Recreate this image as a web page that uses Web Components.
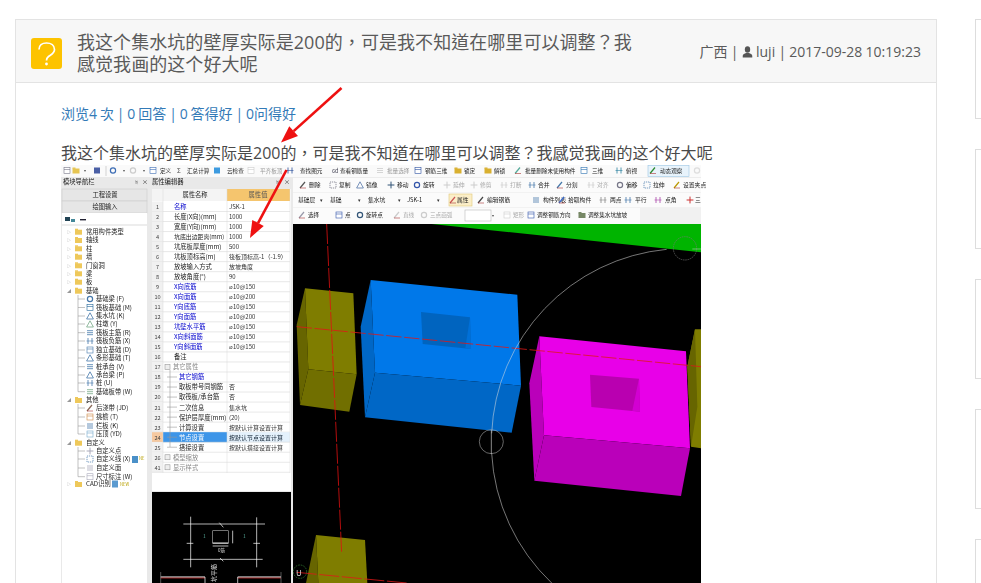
<!DOCTYPE html>
<meta charset="utf-8">
<title>问题详情</title>
<style>
    html, body { margin: 0; background: #fff; }
    body { font-family: "Open Sans", "Noto Sans CJK TC", sans-serif; color: #555; }
</style>

<template id="question-page-template">
    <style>
        :host { display: flex; gap: 38px; padding: 19px 0 0 15px; width: 981px; height: 583px; box-sizing: border-box; overflow: hidden; }
        .main { flex: none; width: 922px; }
        .side { flex: none; width: 250px; display: flex; flex-direction: column; gap: 30px; }
    </style>
    <div class="main"><slot></slot></div>
    <div class="side"><slot name="side"></slot></div>
</template>

<template id="question-panel-template">
    <style>
        :host { display: block; border: 1px solid #e3e3e3; border-bottom: 0; box-sizing: border-box; height: 564px; }
        header { display: flex; align-items: flex-start; height: 62px; background: #f7f7f7; border-bottom: 1px solid #e3e3e3; padding: 0 15px; }
        .icon { flex: none; width: 31px; height: 31px; margin: 18px 15px 0 0; }
        .title { flex: none; width: 564px; margin-top: 11px; font-size: 18px; line-height: 22px; letter-spacing: .06px; color: #5a5a5a; }
        .meta { flex: 1; margin-top: 21px; text-align: right; font-size: 14px; line-height: 22px; word-spacing: -.4px; color: #5a5a5a; }
        .body { padding: 20px 0 0 45px; }
    </style>
    <header>
        <svg class="icon" viewBox="0 0 31 31">
            <rect width="31" height="31" rx="3" fill="#fdc300"/>
            <path d="M8 11.5C8 7.5 11 5 15.5 5S23.5 7.5 23.5 11.5C23.5 15.5 20 16.5 17.5 18.5C16 19.7 15.5 20.5 15.5 22.5" fill="none" stroke="#fff" stroke-width="1.7"/>
            <circle cx="15.5" cy="26" r="1.4" fill="#fff"/>
        </svg>
        <div class="title"><slot name="title"></slot></div>
        <div class="meta"><slot name="meta"></slot></div>
    </header>
    <div class="body"><slot></slot></div>
</template>

<template id="question-stats-template">
    <style>
        :host { display: block; font-size: 14px; line-height: 22px; word-spacing: -.75px; color: #337ab7; margin-bottom: 17px; }
    </style>
    <slot></slot>
</template>

<template id="question-text-template">
    <style>
        :host { display: block; font-size: 16px; line-height: 22px; color: #4a4a4a; height: 23px; }
    </style>
    <slot></slot>
</template>

<template id="user-icon-template">
    <style>
        :host { display: inline-block; width: 11px; height: 12px; vertical-align: -1px; }
        svg { display: block; }
    </style>
    <svg width="11" height="12" viewBox="0 0 12 13">
        <ellipse cx="6" cy="3.7" rx="2.9" ry="3.5" fill="#555"/>
        <path d="M.8 12.5V10.6C.8 9 3 8.3 4.4 7.7H7.6C9 8.3 11.2 9 11.2 10.6V12.5Z" fill="#555"/>
    </svg>
</template>

<template id="side-box-template">
    <style>
        :host { display: block; flex: none; height: 100px; border: 1px solid #ddd; box-sizing: border-box; }
    </style>
    <slot></slot>
</template>

<question-page>
    <question-panel>
        <span slot="title">我这个集水坑的壁厚实际是200的，可是我不知道在哪里可以调整？我感觉我画的这个好大呢</span>
        <span slot="meta">广西 | <user-icon></user-icon> luji | 2017-09-28 10:19:23</span>
        <question-stats>浏览4 次 | 0 回答 | 0 答得好 | 0问得好</question-stats>
        <question-text>我这个集水坑的壁厚实际是200的，可是我不知道在哪里可以调整？我感觉我画的这个好大呢</question-text>
        <cad-shot></cad-shot>
    </question-panel>
    <side-box slot="side"></side-box>
    <side-box slot="side"></side-box>
    <side-box slot="side"></side-box>
    <side-box slot="side"></side-box>
    <side-box slot="side"></side-box>
</question-page>

<script>
    function simple(name, id) {
        customElements.define(name, class extends HTMLElement {
            constructor() {
                super();
                this.attachShadow({ mode: "open" }).appendChild(document.getElementById(id).content.cloneNode(true));
            }
        });
    }
    simple("question-page", "question-page-template");
    simple("question-panel", "question-panel-template");
    simple("question-stats", "question-stats-template");
    simple("question-text", "question-text-template");
    simple("user-icon", "user-icon-template");
    simple("side-box", "side-box-template");

    // small text in page coordinates, y is the middle of the line
    function t(x, y, s, fill = "#222", anchor = "start", size = 6.3) {
        return `<text x="${x}" y="${y + 2.4}" fill="${fill}" font-size="${size}" text-anchor="${anchor}">${s}</text>`;
    }
    function r(x, y, w, h, fill, stroke) {
        return `<rect x="${x}" y="${y}" width="${w}" height="${h}" fill="${fill}"${stroke ? ` stroke="${stroke}" stroke-width=".6"` : ""}/>`;
    }
    function l(x1, y1, x2, y2, stroke = "#ccc", w = 0.7) {
        return `<line x1="${x1}" y1="${y1}" x2="${x2}" y2="${y2}" stroke="${stroke}" stroke-width="${w}"/>`;
    }
    function p(points, fill) {
        return `<polygon points="${points}" fill="${fill}"/>`;
    }
    // tiny toolbar glyphs, x,y is the icon's centre
    function g(x, y, kind, c = "#47a") {
        switch (kind) {
            case "pen": return l(x - 3, y + 3, x + 2, y - 3, c, 1.2) + l(x - 3, y + 3, x + 3, y + 3, "#a33", 0.6);
            case "dash": return `<rect x="${x - 3}" y="${y - 3}" width="6" height="6" fill="none" stroke="${c}" stroke-width=".7" stroke-dasharray="1.2 .8"/>`;
            case "tri": return `<path d="M${x} ${y - 3.2}L${x + 3.4} ${y + 3}H${x - 3.4}Z" fill="none" stroke="${c}" stroke-width=".8"/>`;
            case "cross": return l(x - 3.4, y, x + 3.4, y, c, 1) + l(x, y - 3.4, x, y + 3.4, c, 1);
            case "ring": return `<circle cx="${x}" cy="${y}" r="2.6" fill="none" stroke="${c}" stroke-width="1.2"/>`;
            case "bars": return l(x - 2, y - 3, x - 2, y + 3, c, 0.8) + l(x + 2, y - 3, x + 2, y + 3, c, 0.8) + l(x - 3.5, y, x + 3.5, y, c, 0.6);
            case "lines": return l(x - 3, y - 2, x + 3, y - 2, c, 0.8) + l(x - 3, y, x + 3, y, c, 0.8) + l(x - 3, y + 2, x + 3, y + 2, c, 0.8);
            case "frame": return r(x - 3, y - 3, 6, 6, "#fff", c) + l(x - 3, y - 1, x + 3, y - 1, c, 0.6);
            case "folder": return r(x - 3.5, y - 2, 7, 5, c) + r(x - 3.5, y - 3, 3, 1.4, c);
            default: return r(x - 3, y - 3, 6, 6, c);
        }
    }

    function toolbar() {
        let s = r(61, 165, 640, 12, "#fafafa") + r(293, 177, 408, 47, "#fbfbfb");
        s += r(293, 177, 408, 1, "#ececec") + r(293, 192, 408, 1, "#f2f2f2") + r(293, 207, 408, 1, "#f2f2f2");
        s += r(640, 208, 61, 16, "#f1f1f1");
        s += r(648, 165.5, 41, 11, "#e8f3fb", "#9cc5e5");
        [[67, "frame", "#778"], [76, "folder", "#e6c552"], [97, "box", "#4a5fa5"], [113, "ring", "#3d6db5"], [133, "ring", "#ccc"], [153, "frame", "#3d6db5"], [217, "box", "#3d9be0"], [251, "frame", "#ccc"], [290, "bars", "#2a4f9a"], [380, "lines", "#ccc"], [418, "frame", "#2a4fa0"], [458, "folder", "#d9b030"], [488, "folder", "#d9b030"], [518, "pen", "#5a9"], [584, "frame", "#2a70b0"], [619, "bars", "#2a80a0"], [653, "pen", "#2a8a30"], [697, "ring", "#ddd"]].forEach(([x, k, c]) => s += g(x, 170.5, k, c));
        [84, 123, 143].forEach(x => s += t(x, 170, "▾", "#555", "start", 4));
        s += l(106, 166, 106, 176, "#bbb", 0.6);
        s += t(177, 170.5, "Σ", "#444");
        [[160, "定义"], [187, "汇总计算"], [227, "云检查"], [300, "查找图元"], [340, "查看钢筋量"], [425, "钢筋三维"], [464, "锁定"], [494, "解锁"], [525, "批量删除未使用构件"], [592, "三维"], [626, "俯视"], [660, "动态观察"]].forEach(([x, v]) => s += t(x, 170.5, v, "#222", "start", 5.6));
        [[260, "平齐板顶"], [387, "批量选择"]].forEach(([x, v]) => s += t(x, 170.5, v, "#999", "start", 5.6));
        s += t(332, 170.5, "6d", "#445", "start", 5.6);

        [[309, "删除", "pen", "#555"], [339, "复制", "dash", "#667"], [366, "镜像", "tri", "#57a"], [397, "移动", "cross", "#357"], [423, "旋转", "ring", "#35a"], [453, "延伸", "cross", "#ccc"], [480, "修剪", "cross", "#ccc"], [510, "打断", "bars", "#ccc"], [538, "合并", "bars", "#47a"], [566, "分割", "pen", "#47a"], [597, "对齐", "bars", "#ccc"], [626, "偏移", "ring", "#778"], [653, "拉伸", "dash", "#47a"], [683, "设置夹点", "pen", "#b90"]].forEach(([x, v, k, c]) => {
            s += g(x - 6, 185, k, c);
            s += t(x, 185, v, c === "#ccc" ? "#aaa" : "#222", "start", 5.8);
        });

        [[298, "基础层"], [330, "基础"], [368, "集水坑"], [407, "JSK-1"], [487, "编辑钢筋"], [543, "构件列表"], [568, "拾取构件"], [610, "两点"], [635, "平行"], [665, "点角"], [695, "三"]].forEach(([x, v]) => s += t(x, 200, v, "#222", "start", 5.8));
        [320, 358, 398, 437].forEach(x => s += t(x, 200, "▾", "#333", "start", 4.5));
        s += r(449, 194, 23, 12, "#fbeec8", "#e2c878") + g(453, 200, "pen", "#c55") + t(457, 200, "属性", "#222", "start", 5.8);
        [[481, "pen", "#444"], [536, "lines", "#47a"], [562, "pen", "#36c"], [603, "bars", "#888"], [628, "bars", "#47a"], [658, "bars", "#a4a"], [690, "cross", "#c33"]].forEach(([x, k, c]) => s += g(x, 200, k, c));

        [[308, "选择", "pen", "#99a"], [345, "点", "frame", "#35a"], [366, "旋转点", "ring", "#357"], [403, "直线", "pen", "#ccc"], [430, "三点画弧", "ring", "#ccc"], [513, "矩形", "frame", "#ccc"], [537, "调整钢筋方向", "frame", "#35a"], [588, "调整集水坑放坡", "folder", "#786"]].forEach(([x, v, k, c]) => {
            s += g(x - 6, 215, k, c);
            s += t(x, 215, v, c === "#ccc" ? "#aaa" : "#222", "start", 5.6);
        });
        s += r(465, 210, 26, 11, "#fff", "#bbb") + t(492, 215, "▾", "#555", "start", 4);
        return s;
    }

    function tree() {
        let s = r(61, 177, 90, 406, "#e9e9e9") + r(62, 225, 85, 358, "#fff");
        s += r(62, 189, 85, 12, "#e6e6e6", "#ccc") + r(62, 201, 85, 12, "#e6e6e6", "#ccc") + r(62, 213, 85, 12, "#fff");
        s += t(63, 182, "模块导航栏") + t(134, 182, "♮", "#333", "start", 5) + t(142, 182, "×", "#333", "start", 6);
        s += t(105, 195, "工程设置", "#222", "middle") + t(105, 207, "绘图输入", "#222", "middle");
        s += r(65, 217, 5, 4, "#245") + r(71, 219, 4, 3, "#489") + r(80, 219, 6, 1.4, "#223");
        s += l(62, 225, 147, 225, "#ccc");
        const top = [[231.7, "常用构件类型"], [240, "轴线"], [248.3, "柱"], [256.7, "墙"], [265.3, "门窗洞"], [273.3, "梁"], [281.7, "板"], [290.7, "基础", 1], [400, "其他", 1], [442.7, "自定义", 1], [484, "CAD识别"]];
        const kids = [[299, "基础梁 (F)", "ring", "#47a"], [307.5, "筏板基础 (M)", "frame", "#269"], [316, "集水坑 (K)", "tri", "#47a"], [324, "柱墩 (Y)", "tri", "#7a8"], [332.7, "筏板主筋 (R)", "lines", "#47a"], [341, "筏板负筋 (X)", "bars", "#47a"], [350, "独立基础 (D)", "frame", "#47a"], [358, "条形基础 (T)", "tri", "#47a"], [366.7, "桩承台 (V)", "lines", "#47a"], [375, "承台梁 (P)", "tri", "#47a"], [383, "桩 (U)", "bars", "#47a"], [391.7, "基础板带 (W)", "lines", "#7a8"], [408, "后浇带 (JD)", "pen", "#865"], [417, "挑檐 (T)", "frame", "#c84"], [426, "栏板 (K)", "lines", "#47a"], [434, "压顶 (YD)", "frame", "#7ac"], [451, "自定义点", "cross", "#aab"], [459, "自定义线 (X)", "dash", "#47a"], [468, "自定义面", "lines", "#aab"], [476.7, "尺寸标注 (W)", "frame", "#aab"]];
        top.forEach(([y, v, open]) => {
            s += t(67, y, open ? "◢" : "▷", "#999", "start", 4);
            s += g(78.5, y, "folder", "#eec85a");
            s += t(86, y, v);
        });
        kids.forEach(([y, v, k, c]) => {
            s += l(78, y, 85, y, "#999", 0.6);
            s += g(90, y, k, c);
            s += t(96, y, v);
        });
        s += l(78, 295, 78, 391.7, "#999", 0.6) + l(78, 404, 78, 434, "#999", 0.6) + l(78, 447, 78, 476.7, "#999", 0.6);
        s += r(132, 456, 6, 7, "#4a90c8") + t(139, 458, "NE", "#b8a000", "start", 4.2);
        s += r(112, 480.5, 6, 7, "#5a9ad0") + t(120, 484, "NEW", "#b8a000", "start", 4.2);
        return s;
    }

    function props() {
        let s = r(151, 177, 142, 406, "#e9e9e9") + r(152, 189, 139, 302, "#fff");
        s += t(152, 182, "属性编辑器") + t(275, 182, "♮", "#333", "start", 5) + t(284, 182, "×", "#333", "start", 6);
        s += r(152, 189, 75, 12, "#f4f4f4") + r(227, 189, 63, 12, "#f5c56e");
        s += t(195, 195, "属性名称", "#222", "middle") + t(258, 195, "属性值", "#555", "middle");
        const rows = [
            [1, "名称", "JSK-1", "#00c"], [2, "长度(X向)(mm)", "1000"], [3, "宽度(Y向)(mm)", "1000"], [4, "坑底出边距离(mm)", "1000"],
            [5, "坑底板厚度(mm)", "500"], [6, "坑板顶标高(m)", "筏板顶标高-1（-1.9）"], [7, "放坡输入方式", "放坡角度"], [8, "放坡角度(°)", "90"],
            [9, "X向底筋", "⌀10@150", "#00c"], [10, "X向面筋", "⌀10@200", "#00c"], [11, "Y向底筋", "⌀10@150", "#00c"], [12, "Y向面筋", "⌀10@200", "#00c"],
            [13, "坑壁水平筋", "⌀10@150", "#00c"], [14, "X向斜面筋", "⌀10@150", "#00c"], [15, "Y向斜面筋", "⌀10@150", "#00c"], [16, "备注", ""],
            [17, "其它属性", "", "#888", 1], [18, "其它钢筋", "", "#00c", 2], [19, "取板带号同钢筋", "否", "#222", 2], [20, "取筏板/承台筋", "否", "#222", 2],
            [21, "二次信息", "集水坑", "#222", 2], [22, "保护层厚度(mm)", "(20)", "#222", 2], [23, "计算设置", "按默认计算设置计算", "#222", 2], [24, "节点设置", "按默认节点设置计算", "#fff", 2],
            [25, "搭接设置", "按默认搭接设置计算", "#222", 2], [26, "模型缩放", "", "#888", 1], [41, "显示样式", "", "#888", 1]
        ];
        rows.forEach(([n, name, val, color = "#222", kind = 0], i) => {
            const y = 206.5 + i * 10.03;
            s += r(152, y - 5, 11, 10, n === 24 ? "#f6c9a0" : "#f1f1f1");
            if (n === 24) s += r(163, y - 5, 64, 10, "#3d95e8") + r(227, y - 5, 63, 10, "#e4f1fc");
            s += l(152, y + 5, 290, y + 5, "#d0d0d0", 0.5);
            s += t(157.5, y, n, "#444", "middle", 5.6);
            if (kind === 1) s += r(165, y - 2.5, 5, 5, "#eee", "#999");
            if (kind === 2) s += l(167, y, 177, y, "#999", 0.6);
            s += t(kind === 1 ? 173 : kind === 2 ? 179 : 174, y, name, color, "start", n === 4 ? 5.9 : 6.3);
            if (val) s += t(229, y, val, n === 24 ? "#123" : "#333", "start", 6);
        });
        s += l(163, 189, 163, 473, "#d8d8d8", 0.5) + l(227, 189, 227, 473, "#d8d8d8", 0.5) + l(290, 189, 290, 473, "#d8d8d8", 0.5);
        s += l(170, 370, 170, 447, "#999", 0.6);
        // section preview
        s += r(152, 492, 139, 91, "#000");
        const w = (a, b, c, d) => l(60 + a / 3, 480 + b / 3, 60 + c / 3, 480 + d / 3, "#fff", 0.7);
        s += w(370, 132, 615, 132) + w(370, 238, 608, 238) + w(392, 110, 392, 262) + w(590, 112, 590, 262);
        s += `<rect x="212.7" y="530.7" width="15.6" height="12.6" fill="none" stroke="#bbb" stroke-width=".6"/>`;
        s += l(212.7, 543, 228.3, 543, "#fff", 0.9) + w(458, 198, 505, 198) + w(518, 152, 518, 190);
        s += w(380, 190, 400, 190) + w(580, 190, 600, 190) + w(478, 128, 490, 142) + w(480, 234, 490, 244);
        s += t(203, 536, "1", "#5a9", "start", 5) + t(243, 536, "1", "#5a9", "start", 5) + t(218, 550, "0筋", "#ddd", "start", 4.5);
        s += l(160.7, 577, 205, 577, "#fff", 1) + l(237.7, 577, 281, 577, "#fff", 1) + l(160.7, 578, 205, 578, "#f33", 0.6) + l(237.7, 578, 281, 578, "#f33", 0.6);
        s += l(160.7, 572, 160.7, 583, "#aaa", 0.5) + l(205, 577, 205, 583, "#fff", 0.7) + l(237.7, 577, 237.7, 583, "#fff", 0.7) + l(281, 572, 281, 583, "#aaa", 0.5);
        s += `<text transform="translate(216 582) rotate(-90)" fill="#ddd" font-size="6">坑平筋</text>`;
        return s;
    }

    function scene() {
        // coords below were read off at 3x, hence the group scale
        const olive = "#7f7d00", oliveD = "#676500", oliveS = "#716f00";
        const blue = "#0078e9", blueD = "#0067c6";
        const pink = "#e800e8", pinkD = "#ba00ba";
        return `<rect x="293" y="224" width="408" height="359" fill="#000"/>
        <g transform="translate(290 220) scale(.33333)">
            ${p("425,12 1233,12 1233,97", "#00b400")}
            ${p("45,205 20,315 30,555 55,448", oliveD)}${p("45,205 190,220 200,463 55,448", olive)}${p("55,448 200,463 178,575 30,555", oliveS)}
            ${p("242,180 212,320 225,592 255,458", blueD)}${p("242,180 682,224 693,497 255,458", blue)}${p("255,458 693,497 665,638 225,592", blueD)}
            ${p("393,276 540,292 543,387 398,372", "#0064bf")}${p("540,292 543,387 526,385", "#0070d8")}
            ${p("748,349 718,490 733,782 762,646", pinkD)}${p("748,349 1188,394 1200,685 762,646", pink)}${p("762,646 1200,685 1173,828 733,782", pinkD)}
            ${p("900,464 1047,476 1050,575 904,561", "#b900b0")}${p("1047,476 1050,575 1027,572", "#d200d2")}
            ${p("1215,328 1192,440 1203,680 1233,685 1233,328", olive)}${p("1215,328 1192,440 1203,680 1222,560", oliveD)}
            ${p("78,945 48,1089 85,1089", oliveD)}${p("78,945 225,960 232,1089 85,1089", olive)}
            <path d="M110 12L155 1000" stroke="#e01010" stroke-width="2.4" stroke-dasharray="60 6" fill="none"/>
            <path d="M20 320L1233 440" stroke="#e01818" stroke-width="2.4" stroke-dasharray="46 8" fill="none"/>
            <path d="M20 1057L350 1089" stroke="#e01818" stroke-width="2.4" stroke-dasharray="60 8" fill="none"/>
            <path d="M1130 88A580 580 0 0 0 605 640M605 700A580 580 0 0 0 785 1089" stroke="#ddd" stroke-width="1.6" fill="none"/>
            <circle cx="1185" cy="85" r="35" stroke="#777" stroke-width="1.8" fill="none" stroke-dasharray="5 2"/>
            <circle cx="604" cy="665" r="36" stroke="#aaa" stroke-width="1.8" fill="none"/>
            <path d="M604 630V702" stroke="#ccc" stroke-width="2" fill="none"/>
            <path d="M1207 87H1233" stroke="#9c9" stroke-width="2" fill="none"/>
            <circle cx="30" cy="1055" r="20" stroke="#3a8a3a" stroke-width="2" fill="none" stroke-dasharray="5 3"/>
        </g>
        <text x="296" y="575.5" fill="#ddd" font-size="8">U</text>`;
    }

    function arrow(x1, y1, x2, y2) {
        const a = Math.atan2(y2 - y1, x2 - x1), c = Math.cos(a), s = Math.sin(a);
        const bx = x2 - 17 * c, by = y2 - 17 * s, hw = 6.5;
        return `<line x1="${x1}" y1="${y1}" x2="${bx}" y2="${by}" stroke="#ee1111" stroke-width="2.6"/>
        <polygon points="${x2},${y2} ${bx - hw * s},${by + hw * c} ${bx + hw * s},${by - hw * c}" fill="#ee1111"/>`;
    }

    customElements.define("cad-shot", class CadShot extends HTMLElement {
        constructor() {
            super();
            this.attachShadow({ mode: "open" }).innerHTML = `
                <style>
                    :host { display: block; width: 640px; height: 418px; }
                    svg { display: block; overflow: visible; font-family: "Noto Sans CJK SC", "Liberation Sans", sans-serif; }
                    .soft { filter: blur(.4px); }
                </style>
                <svg width="640" height="418" viewBox="61 165 640 418">
                    <g class="soft">${toolbar()}${tree()}${props()}${scene()}</g>
                    ${arrow(341.5, 88, 281, 142.5)}
                    ${arrow(286.5, 170, 250, 238)}
                </svg>`;
        }
    });
</script>
